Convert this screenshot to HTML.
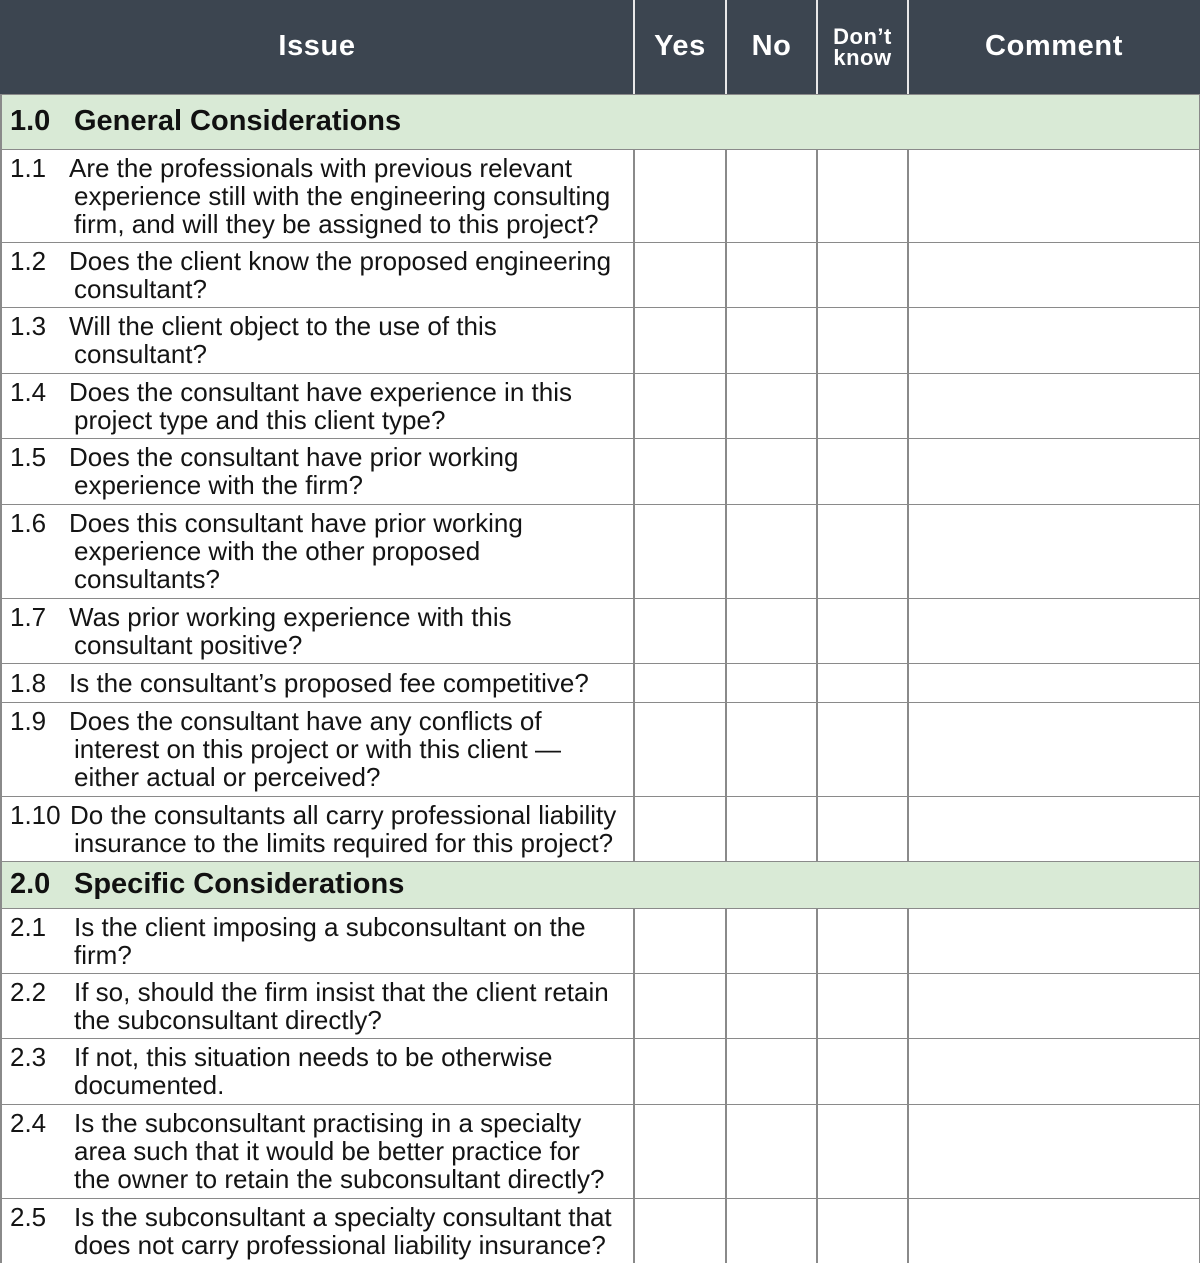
<!DOCTYPE html>
<html><head><meta charset="utf-8"><style>
body{margin:0;width:1200px;height:1263px;position:relative;background:#fff;font-family:"Liberation Sans",sans-serif;color:#141414;overflow:hidden}
.hd{position:absolute;top:0;left:0;width:1200px;height:94px;background:#3c4550}
.ht{position:absolute;color:#fff;font-weight:bold;font-size:29px;letter-spacing:0.6px;top:30px;text-align:center}
.hv{position:absolute;top:0;width:2px;height:94px;background:#e8e8e8}
.sec{position:absolute;left:0;width:1200px;background:#d9ead6;border-top:1.5px solid #8a8a8a;box-sizing:border-box;font-weight:bold;font-size:29px;color:#111}
.row{position:absolute;left:0;width:1200px;border-top:1.5px solid #8a8a8a;box-sizing:border-box;font-size:26px;line-height:28px;white-space:nowrap}
.n{position:absolute;left:10px}
.t{position:absolute;left:69px}
.t2{position:absolute;left:74px}
.v{position:absolute;width:1.5px;background:#8a8a8a}
</style></head><body>
<div class="hd"></div>
<div class="ht" style="left:0;width:634px">Issue</div>
<div class="ht" style="left:634px;width:92px">Yes</div>
<div class="ht" style="left:726px;width:91px">No</div>
<div class="ht" style="left:817px;width:91px;font-size:22px;letter-spacing:0.5px;line-height:21px;top:26px">Don’t<br>know</div>
<div class="ht" style="left:908px;width:292px">Comment</div>
<div class="hv" style="left:633px"></div><div class="hv" style="left:725px"></div><div class="hv" style="left:816px"></div><div class="hv" style="left:907px"></div>

<div class="sec" style="top:94px;height:55px"><span style="position:absolute;left:10px;top:10px">1.0</span><span style="position:absolute;left:74px;top:10px">General Considerations</span></div>

<div class="row" style="top:149px;height:93px"><div class="n" style="top:4px">1.1</div><div class="t" style="top:4px">Are the professionals with previous relevant</div><div class="t2" style="top:32px">experience still with the engineering consulting<br>firm, and will they be assigned to this project?</div></div>
<div class="row" style="top:242px;height:65px"><div class="n" style="top:4px">1.2</div><div class="t" style="top:4px">Does the client know the proposed engineering</div><div class="t2" style="top:32px">consultant?</div></div>
<div class="row" style="top:307px;height:66px"><div class="n" style="top:4px">1.3</div><div class="t" style="top:4px">Will the client object to the use of this</div><div class="t2" style="top:32px">consultant?</div></div>
<div class="row" style="top:373px;height:65px"><div class="n" style="top:4px">1.4</div><div class="t" style="top:4px">Does the consultant have experience in this</div><div class="t2" style="top:32px">project type and this client type?</div></div>
<div class="row" style="top:438px;height:66px"><div class="n" style="top:4px">1.5</div><div class="t" style="top:4px">Does the consultant have prior working</div><div class="t2" style="top:32px">experience with the firm?</div></div>
<div class="row" style="top:504px;height:94px"><div class="n" style="top:4px">1.6</div><div class="t" style="top:4px">Does this consultant have prior working</div><div class="t2" style="top:32px">experience with the other proposed<br>consultants?</div></div>
<div class="row" style="top:598px;height:65px"><div class="n" style="top:4px">1.7</div><div class="t" style="top:4px">Was prior working experience with this</div><div class="t2" style="top:32px">consultant positive?</div></div>
<div class="row" style="top:663px;height:39px"><div class="n" style="top:5px">1.8</div><div class="t" style="top:5px">Is the consultant’s proposed fee competitive?</div></div>
<div class="row" style="top:702px;height:94px"><div class="n" style="top:4px">1.9</div><div class="t" style="top:4px">Does the consultant have any conflicts of</div><div class="t2" style="top:32px">interest on this project or with this client —<br>either actual or perceived?</div></div>
<div class="row" style="top:796px;height:65px"><div class="n" style="top:4px">1.10</div><div class="t" style="top:4px;left:70px">Do the consultants all carry professional liability</div><div class="t2" style="top:32px">insurance to the limits required for this project?</div></div>

<div class="sec" style="top:861px;height:47px"><span style="position:absolute;left:10px;top:6px">2.0</span><span style="position:absolute;left:74px;top:6px">Specific Considerations</span></div>

<div class="row" style="top:908px;height:65px"><div class="n" style="top:4px">2.1</div><div class="t2" style="top:4px">Is the client imposing a subconsultant on the<br>firm?</div></div>
<div class="row" style="top:973px;height:65px"><div class="n" style="top:4px">2.2</div><div class="t2" style="top:4px">If so, should the firm insist that the client retain<br>the subconsultant directly?</div></div>
<div class="row" style="top:1038px;height:66px"><div class="n" style="top:4px">2.3</div><div class="t2" style="top:4px">If not, this situation needs to be otherwise<br>documented.</div></div>
<div class="row" style="top:1104px;height:94px"><div class="n" style="top:4px">2.4</div><div class="t2" style="top:4px">Is the subconsultant practising in a specialty<br>area such that it would be better practice for<br>the owner to retain the subconsultant directly?</div></div>
<div class="row" style="top:1198px;height:65px"><div class="n" style="top:4px">2.5</div><div class="t2" style="top:4px">Is the subconsultant a specialty consultant that<br>does not carry professional liability insurance?</div></div>

<div class="v" style="left:633px;top:149px;height:712px"></div>
<div class="v" style="left:725px;top:149px;height:712px"></div>
<div class="v" style="left:816px;top:149px;height:712px"></div>
<div class="v" style="left:907px;top:149px;height:712px"></div>
<div class="v" style="left:633px;top:908px;height:355px"></div>
<div class="v" style="left:725px;top:908px;height:355px"></div>
<div class="v" style="left:816px;top:908px;height:355px"></div>
<div class="v" style="left:907px;top:908px;height:355px"></div>
<div class="v" style="left:0;top:94px;height:1169px"></div>
<div class="v" style="left:1198.5px;top:94px;height:1169px"></div>
</body></html>
